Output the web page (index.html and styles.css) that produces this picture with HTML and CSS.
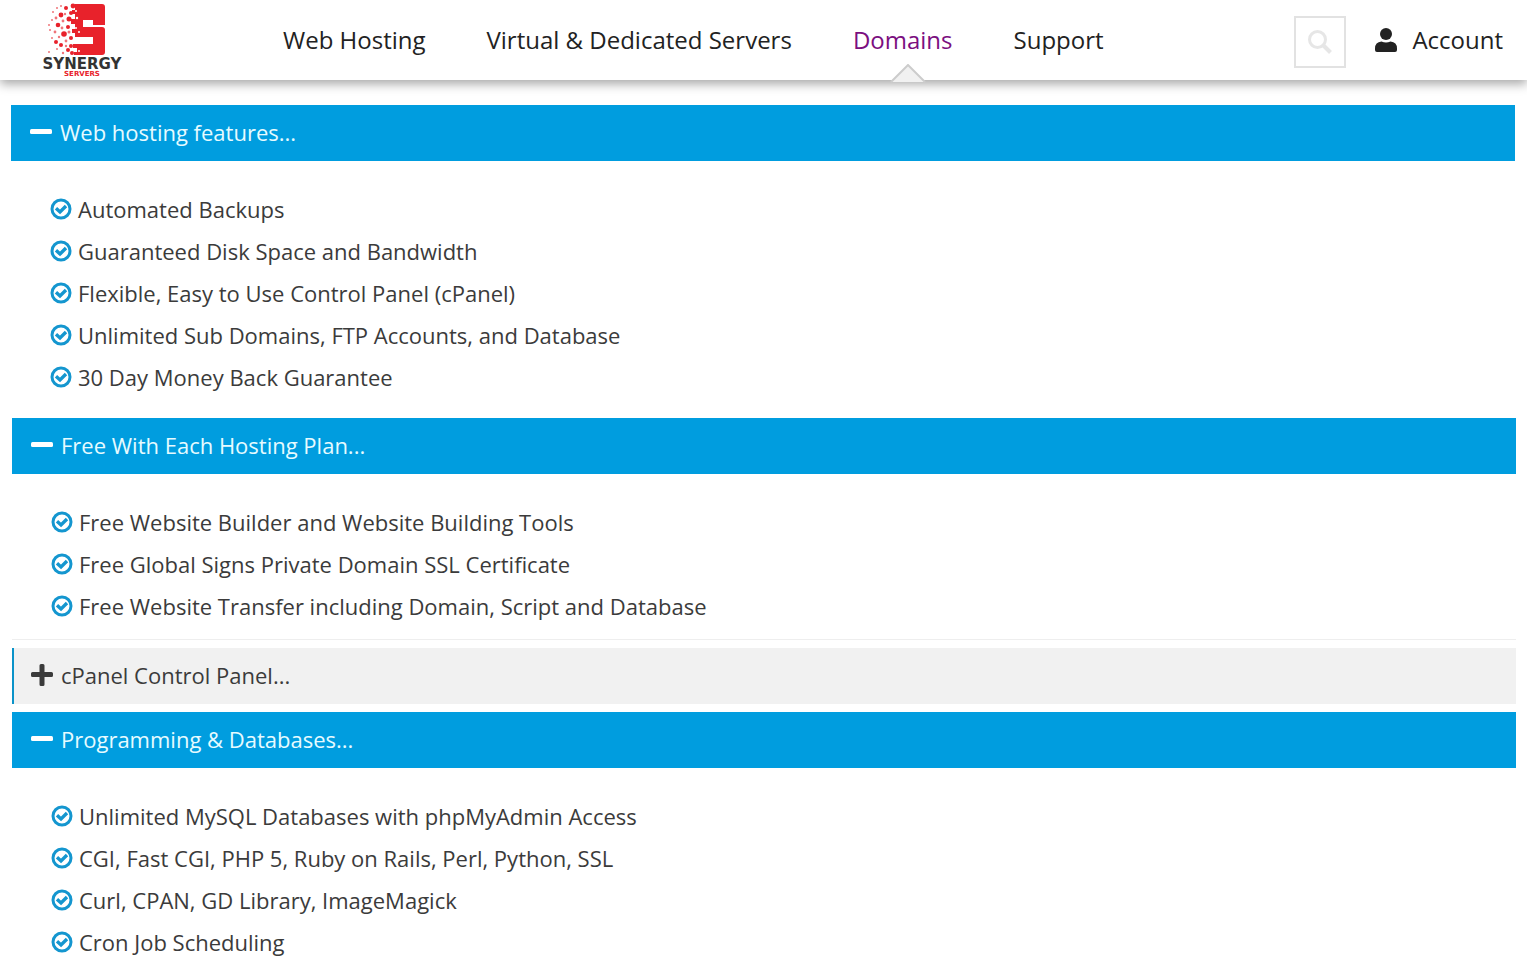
FILE: index.html
```
<!DOCTYPE html>
<html lang="en">
<head>
<meta charset="utf-8">
<meta name="viewport" content="width=device-width, initial-scale=1">
<title>Synergy Servers - Web hosting features</title>
<link rel="stylesheet" href="styles.css">
</head>
<body>
<svg class="sprite" aria-hidden="true">
  <symbol id="check" viewBox="0 0 22 22">
    <circle cx="11" cy="11" r="9" fill="none" stroke="currentColor" stroke-width="3"/>
    <path d="M6 10.300 10 14l6-6" fill="none" stroke="currentColor" stroke-width="3.400"/>
  </symbol>
  <symbol id="minus" viewBox="0 0 22 22"><rect y="8" width="22" height="5" rx="1.500" fill="currentColor"/></symbol>
  <symbol id="plus" viewBox="0 0 22 22"><path d="M2 8h6.500V1.500q0-1.500 1.500-1.500h2q1.500 0 1.500 1.500V8H20.500q1.500 0 1.500 1.500v2q0 1.500-1.500 1.500H13.500v7.500q0 1.500-1.500 1.500h-2q-1.500 0-1.500-1.500V13H1.500Q0 13 0 11.500v-2Q0 8 1.500 8z" fill="currentColor"/></symbol>
</svg>

<header class="header">
  <a class="logo" href="#" aria-label="Synergy Servers">
    <svg class="logo-mark" viewBox="0 0 58 54" aria-hidden="true">
      <path fill="#e8222b" d="M28 1H55Q58 1 58 4V22H46V17H36V24H55Q58 24 58 27V49Q58 52 55 52H27V49H30V45H26V41H46V34H28V30H25V26H28V21H24V16H28V11H25V7H28z"/>
      <g fill="#e8222b">
        <circle cx="14" cy="12" r="2.400"/><circle cx="11" cy="22" r="2.300"/><circle cx="17" cy="31" r="2.800"/><circle cx="9" cy="39" r="2"/><circle cx="14" cy="42" r="2"/><circle cx="19" cy="5" r="2"/><circle cx="22" cy="16" r="2.500"/><circle cx="21" cy="24" r="2"/><circle cx="24" cy="35" r="2"/><circle cx="21" cy="47" r="2"/><circle cx="26" cy="3" r="2.400"/><circle cx="24" cy="10" r="2"/><circle cx="25" cy="50" r="2"/><circle cx="24" cy="43" r="2"/>
      </g>
      <g fill="#ef7479">
        <circle cx="5" cy="17" r="1"/><circle cx="3" cy="27" r="1"/><circle cx="6" cy="9" r="1"/><circle cx="2" cy="49" r="1"/><circle cx="8" cy="29" r="1.400"/><circle cx="14" cy="3" r="1"/><circle cx="2" cy="22" r="1"/><circle cx="19" cy="38" r="1.400"/><circle cx="16" cy="18" r="1.400"/><circle cx="15" cy="25" r="1.400"/><circle cx="9" cy="15" r="1.400"/><circle cx="5" cy="35" r="1"/><circle cx="10" cy="46" r="1"/><circle cx="16" cy="50" r="1.200"/><circle cx="18" cy="11" r="1.200"/><circle cx="12" cy="34" r="1.200"/><circle cx="10" cy="5" r="1"/><circle cx="22" cy="29" r="1.500"/><circle cx="19" cy="43" r="1.200"/>
      </g>
      <g fill="#fff">
        <circle cx="29" cy="8" r="1"/><circle cx="30" cy="15" r="1.200"/><circle cx="29" cy="25" r="1"/><circle cx="32" cy="48" r="1"/><circle cx="32" cy="29" r="1"/>
      </g>
    </svg>
    <span class="logo-name">SYNERGY</span>
    <span class="logo-sub">SERVERS</span>
  </a>
  <nav class="nav" aria-label="Main">
    <a href="#">Web Hosting</a>
    <a href="#">Virtual &amp; Dedicated Servers</a>
    <a class="current" href="#" aria-current="page">Domains<svg class="pointer" viewBox="0 0 36 19" aria-hidden="true"><path d="M1 18 18 1l17 17" fill="#f1f1f1" stroke="#ccc" stroke-width="2"/></svg></a>
    <a href="#">Support</a>
  </nav>
  <div class="tools">
    <button class="search" type="button" aria-label="Search">
      <svg viewBox="0 0 24 24" aria-hidden="true"><circle cx="9.500" cy="9.500" r="8" fill="none" stroke="currentColor" stroke-width="3"/><path d="m15 15 7.500 7.500" stroke="currentColor" stroke-width="4"/></svg>
    </button>
    <a class="account" href="#">
      <svg viewBox="0 0 22 24" aria-hidden="true"><circle cx="11" cy="6" r="6" fill="currentColor"/><path d="M6.500 13.500Q11 15.500 15.500 13.500 22 14 22 20.500V22q0 2-2 2H2q-2 0-2-2V20.500Q0 14 6.500 13.500z" fill="currentColor"/></svg>
      Account
    </a>
  </div>
</header>

<main>
  <div class="group group-first">
    <section>
      <button class="bar open" type="button" aria-expanded="true"><svg aria-hidden="true"><use href="#minus"/></svg>Web hosting features...</button>
      <ul class="features">
        <li><svg aria-hidden="true"><use href="#check"/></svg>Automated Backups</li>
        <li><svg aria-hidden="true"><use href="#check"/></svg>Guaranteed Disk Space and Bandwidth</li>
        <li><svg aria-hidden="true"><use href="#check"/></svg>Flexible, Easy to Use Control Panel (cPanel)</li>
        <li><svg aria-hidden="true"><use href="#check"/></svg>Unlimited Sub Domains, FTP Accounts, and Database</li>
        <li><svg aria-hidden="true"><use href="#check"/></svg>30 Day Money Back Guarantee</li>
      </ul>
    </section>
  </div>
  <div class="group">
    <section>
      <button class="bar open" type="button" aria-expanded="true"><svg aria-hidden="true"><use href="#minus"/></svg>Free With Each Hosting Plan...</button>
      <ul class="features ruled">
        <li><svg aria-hidden="true"><use href="#check"/></svg>Free Website Builder and Website Building Tools</li>
        <li><svg aria-hidden="true"><use href="#check"/></svg>Free Global Signs Private Domain SSL Certificate</li>
        <li><svg aria-hidden="true"><use href="#check"/></svg>Free Website Transfer including Domain, Script and Database</li>
      </ul>
    </section>
    <section>
      <button class="bar" type="button" aria-expanded="false"><svg aria-hidden="true"><use href="#plus"/></svg>cPanel Control Panel...</button>
    </section>
    <section>
      <button class="bar open" type="button" aria-expanded="true"><svg aria-hidden="true"><use href="#minus"/></svg>Programming &amp; Databases...</button>
      <ul class="features">
        <li><svg aria-hidden="true"><use href="#check"/></svg>Unlimited MySQL Databases with phpMyAdmin Access</li>
        <li><svg aria-hidden="true"><use href="#check"/></svg>CGI, Fast CGI, PHP 5, Ruby on Rails, Perl, Python, SSL</li>
        <li><svg aria-hidden="true"><use href="#check"/></svg>Curl, CPAN, GD Library, ImageMagick</li>
        <li><svg aria-hidden="true"><use href="#check"/></svg>Cron Job Scheduling</li>
      </ul>
    </section>
  </div>
</main>
</body>
</html>
```
FILE: styles.css
```
* { box-sizing: border-box; }
body {
  margin: 0;
  background: #fff;
  color: #3b3b3b;
  font: 22px/42px "Open Sans", sans-serif;
}
a { color: inherit; text-decoration: none; }
button { font: inherit; color: inherit; cursor: pointer; }
.sprite { display: none; }

.header {
  display: flex;
  align-items: center;
  height: 80px;
  padding: 0 24px 0 26px;
  background: #fff;
  color: #222;
  font-size: 24px;
  box-shadow: 0 4px 10px rgba(0, 0, 0, .35);
}
.logo {
  display: flex;
  flex-direction: column;
  align-items: center;
  width: 112px;
  font-family: "DejaVu Sans", sans-serif;
  font-weight: bold;
}
.logo-mark { width: 58px; height: 54px; margin-right: 12px; }
.logo-name { color: #333; font-size: 15px; line-height: 14px; }
.logo-sub { color: #e8222b; font-size: 7px; line-height: 6px; }

.nav { display: flex; gap: 61px; margin-left: 145px; }
.nav a { position: relative; line-height: 78px; }
.nav .current { color: #7b0f80; }
.pointer {
  position: absolute;
  bottom: -4px;
  left: calc(50% - 13px);
  width: 36px;
  height: 19px;
}

.tools { display: flex; align-items: center; gap: 29px; margin-left: auto; }
.search {
  display: grid;
  place-items: center;
  width: 52px;
  height: 52px;
  margin-top: 4px;
  padding: 0;
  border: 2px solid #e2e2e2;
  background: #fff;
  color: #e6e6e6;
}
.search svg { width: 24px; height: 24px; }
.account { display: flex; align-items: center; gap: 15px; }
.account svg { width: 22px; height: 24px; }

.group { padding: 0 11px 0 12px; }
.group-first { padding: 25px 12px 0 11px; }
.bar {
  display: flex;
  align-items: center;
  gap: 8px;
  width: 100%;
  height: 56px;
  margin-bottom: 8px;
  padding: 0 17px 2px;
  border: 0;
  border-left: 2px solid #0a93c9;
  background: #f1f1f1;
  text-align: left;
}
.bar svg { width: 22px; height: 22px; }
.bar.open {
  margin: 0;
  border-color: #009ddf;
  background: #009ddf;
  color: #e6fbff;
}
.bar.open svg { color: #fff; }
.features {
  margin: 0 0 8px;
  padding: 27px 0 12px 39px;
  list-style: none;
}
.features.ruled { border-bottom: 1px solid #eee; }
.features li { display: flex; align-items: center; gap: 6px; }
.features svg { width: 22px; height: 22px; color: #1496cf; flex: none; }
```
